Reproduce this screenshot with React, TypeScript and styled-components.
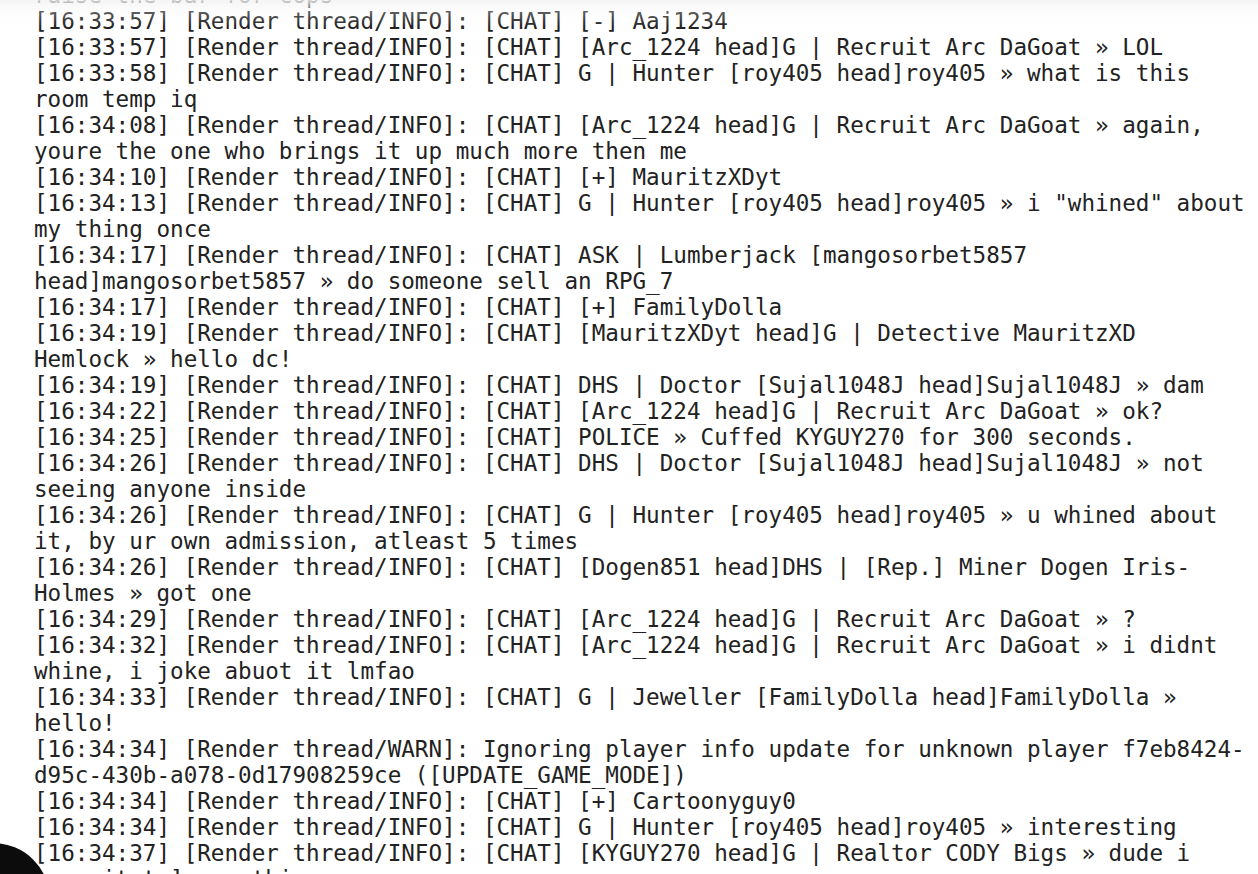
import React from "react";
import styled, { createGlobalStyle } from "styled-components";

const GlobalStyle = createGlobalStyle`
  html, body {
    margin: 0;
    padding: 0;
    background: #ffffff;
    overflow: hidden;
  }
  #root {
    height: 874px;
  }
`;

const Window = styled.div`
  position: relative;
  width: 1258px;
  height: 874px;
  overflow: hidden;
  background: #ffffff;
`;

const Log = styled.div`
  display: flex;
  flex-direction: column;
  margin-top: -18px;
  padding-left: 34px;
  font-family: "DejaVu Sans Mono", "Liberation Mono", monospace;
  font-size: 22.6px;
  line-height: 26px;
  color: #222222;
`;

const Entry = styled.div`
  display: flex;
  flex-direction: column;
`;

const Line = styled.div`
  white-space: pre;
  height: 26px;
`;

const TopFade = styled.div`
  position: absolute;
  left: 0;
  top: 0;
  right: 0;
  height: 36px;
  pointer-events: none;
  background: linear-gradient(
    to bottom,
    rgba(243, 243, 243, 0.85) 0%,
    rgba(248, 248, 248, 0.3) 30%,
    rgba(255, 255, 255, 0) 75%
  );
`;

const CornerShape = styled.div`
  position: absolute;
  left: -64px;
  top: 843px;
  width: 114px;
  height: 114px;
  border-radius: 50%;
  background: #0c0c0c;
`;

const entries: string[][] = [
  ["raise the bar for cops"],
  ["[16:33:57] [Render thread/INFO]: [CHAT] [-] Aaj1234"],
  ["[16:33:57] [Render thread/INFO]: [CHAT] [Arc_1224 head]G | Recruit Arc DaGoat » LOL"],
  [
    "[16:33:58] [Render thread/INFO]: [CHAT] G | Hunter [roy405 head]roy405 » what is this",
    "room temp iq",
  ],
  [
    "[16:34:08] [Render thread/INFO]: [CHAT] [Arc_1224 head]G | Recruit Arc DaGoat » again,",
    "youre the one who brings it up much more then me",
  ],
  ["[16:34:10] [Render thread/INFO]: [CHAT] [+] MauritzXDyt"],
  [
    '[16:34:13] [Render thread/INFO]: [CHAT] G | Hunter [roy405 head]roy405 » i "whined" about',
    "my thing once",
  ],
  [
    "[16:34:17] [Render thread/INFO]: [CHAT] ASK | Lumberjack [mangosorbet5857",
    "head]mangosorbet5857 » do someone sell an RPG_7",
  ],
  ["[16:34:17] [Render thread/INFO]: [CHAT] [+] FamilyDolla"],
  [
    "[16:34:19] [Render thread/INFO]: [CHAT] [MauritzXDyt head]G | Detective MauritzXD",
    "Hemlock » hello dc!",
  ],
  ["[16:34:19] [Render thread/INFO]: [CHAT] DHS | Doctor [Sujal1048J head]Sujal1048J » dam"],
  ["[16:34:22] [Render thread/INFO]: [CHAT] [Arc_1224 head]G | Recruit Arc DaGoat » ok?"],
  ["[16:34:25] [Render thread/INFO]: [CHAT] POLICE » Cuffed KYGUY270 for 300 seconds."],
  [
    "[16:34:26] [Render thread/INFO]: [CHAT] DHS | Doctor [Sujal1048J head]Sujal1048J » not",
    "seeing anyone inside",
  ],
  [
    "[16:34:26] [Render thread/INFO]: [CHAT] G | Hunter [roy405 head]roy405 » u whined about",
    "it, by ur own admission, atleast 5 times",
  ],
  [
    "[16:34:26] [Render thread/INFO]: [CHAT] [Dogen851 head]DHS | [Rep.] Miner Dogen Iris-",
    "Holmes » got one",
  ],
  ["[16:34:29] [Render thread/INFO]: [CHAT] [Arc_1224 head]G | Recruit Arc DaGoat » ?"],
  [
    "[16:34:32] [Render thread/INFO]: [CHAT] [Arc_1224 head]G | Recruit Arc DaGoat » i didnt",
    "whine, i joke abuot it lmfao",
  ],
  [
    "[16:34:33] [Render thread/INFO]: [CHAT] G | Jeweller [FamilyDolla head]FamilyDolla »",
    "hello!",
  ],
  [
    "[16:34:34] [Render thread/WARN]: Ignoring player info update for unknown player f7eb8424-",
    "d95c-430b-a078-0d17908259ce ([UPDATE_GAME_MODE])",
  ],
  ["[16:34:34] [Render thread/INFO]: [CHAT] [+] Cartoonyguy0"],
  ["[16:34:34] [Render thread/INFO]: [CHAT] G | Hunter [roy405 head]roy405 » interesting"],
  [
    "[16:34:37] [Render thread/INFO]: [CHAT] [KYGUY270 head]G | Realtor CODY Bigs » dude i",
    "have it to] one this",
  ],
];

export default function App() {
  return (
    <>
      <GlobalStyle />
      <Window>
        <Log>
          {entries.map((lines, i) => (
            <Entry key={i}>
              {lines.map((text, j) => (
                <Line key={j}>{text}</Line>
              ))}
            </Entry>
          ))}
        </Log>
        <TopFade />
        <CornerShape />
      </Window>
    </>
  );
}
